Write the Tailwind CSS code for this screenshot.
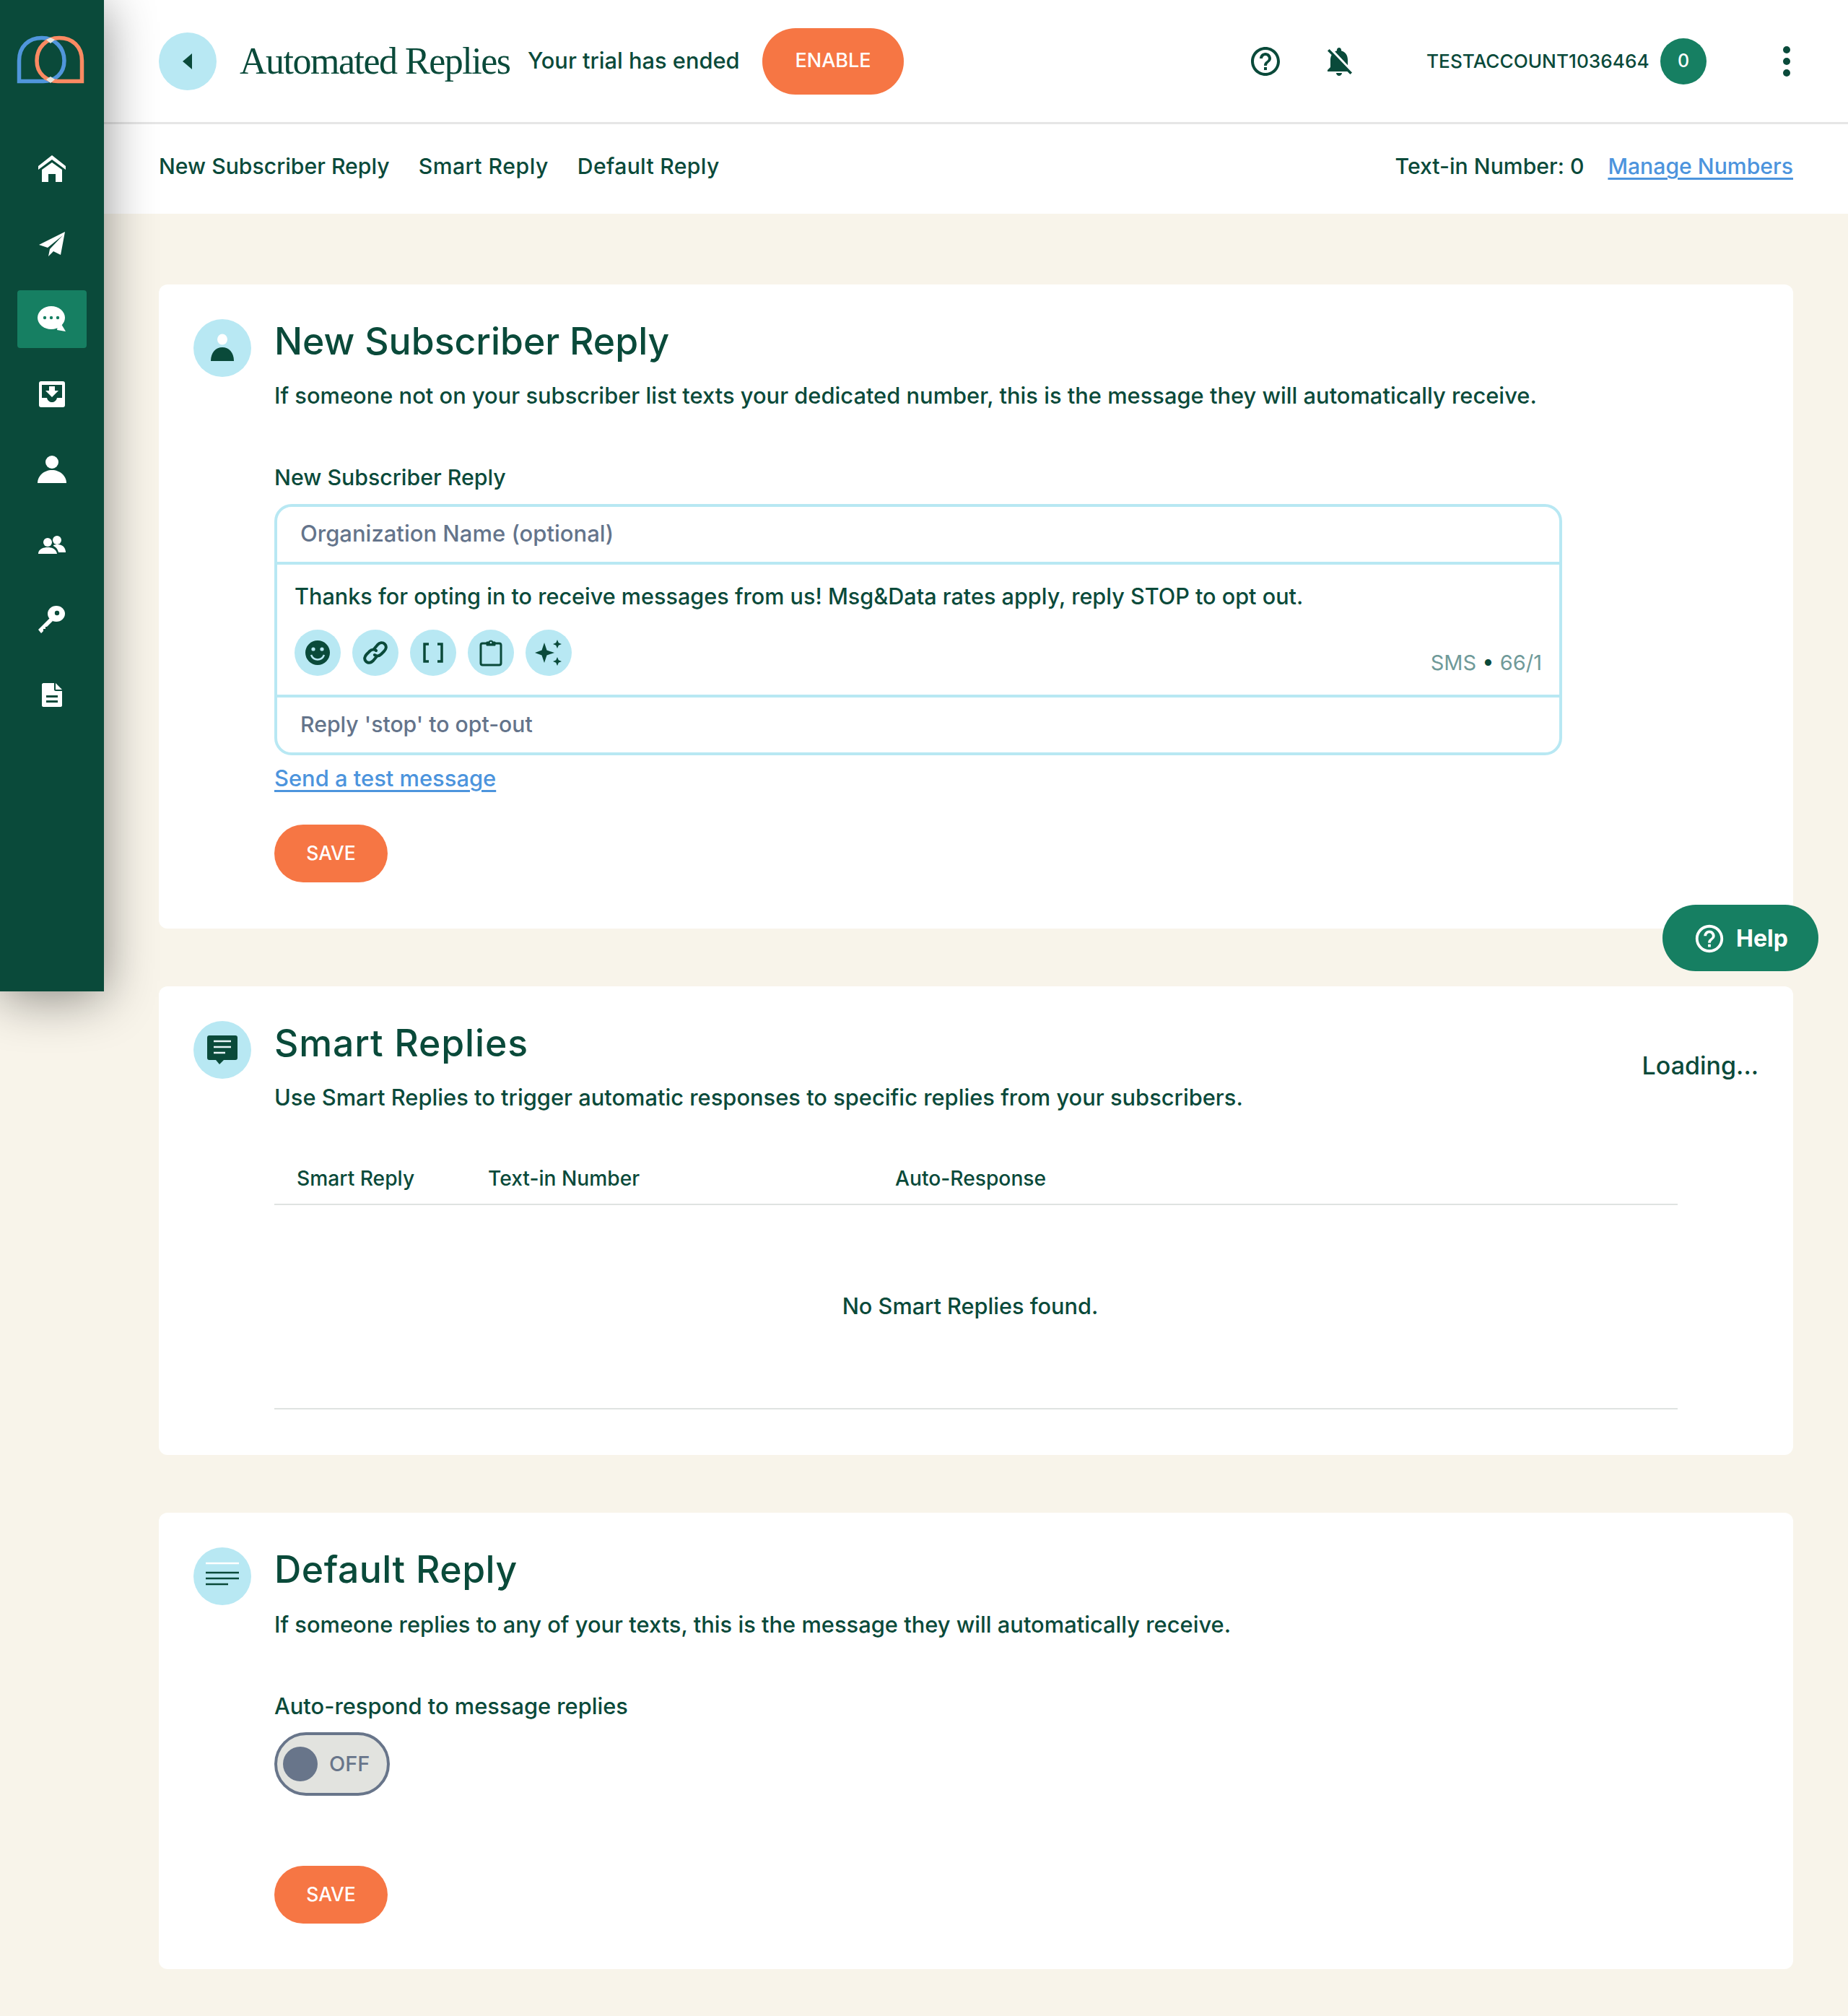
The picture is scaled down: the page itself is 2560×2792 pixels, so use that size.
<!DOCTYPE html>
<html lang="en">
<head>
    <meta charset="UTF-8">
    <title>Automated Replies</title>
    <script src="https://cdn.jsdelivr.net/npm/@tailwindcss/browser@4"></script>
</head>
<body class="bg-[#f8f4ea] font-['Inter',sans-serif] text-[#0a4a3a]">
<div class="relative flex w-[2560px] h-[2792px] overflow-hidden">

    <!-- Sidebar -->
    <aside class="relative z-10 w-[144px] h-[1373px] shrink-0 bg-[#0a4a3a] shadow-[0_8px_70px_rgba(0,0,0,0.45)] flex flex-col items-center">
        <div class="h-[194px] w-full">
            <svg class="w-[144px] h-[130px]" viewBox="0 0 144 130" fill="none" stroke-width="5.5">
                <path d="M26.5 112.5V84C26.5 64 40 52.5 58 52.5C76 52.5 89 66 89 84C89 102 76 112.5 60 112.5Z" stroke="#5096dc"/>
                <path d="M113.5 112.5V84C113.5 64 100 52.5 82 52.5C64 52.5 51 66 51 84C51 102 64 112.5 80 112.5Z" stroke="#fb8a62"/>
                <path d="M64 55L70 52L76 55L70 60Z M64 110L70 106L76 110L70 115Z" fill="#e6e4dc" stroke="none"/>
            </svg>
        </div>
        <nav class="flex flex-col gap-[24px] w-[96px]">
            <a class="h-[80px] flex items-center justify-center">
                <svg class="w-[40px] h-[40px]" viewBox="0 0 40 40" fill="#fff"><path d="M20 1L39 16V21L20 7L1 21V16Z"/><path d="M20 11L34 21V38H25V27H15V38H6V21Z"/></svg>
            </a>
            <a class="h-[80px] flex items-center justify-center">
                <svg class="w-[40px] h-[40px]" viewBox="0 0 40 40" fill="#fff"><path d="M38 3L2 21L14 25L35 8L17 27L15 37L22 30L32 35Z"/></svg>
            </a>
            <a class="h-[80px] flex items-center justify-center bg-[#167f62] rounded-[4px]">
                <svg class="w-[40px] h-[40px]" viewBox="0 0 40 40" fill="#fff"><ellipse cx="19" cy="18" rx="19" ry="16"/><path d="M28 28L32 30L33 27L39 37L27 35Z"/><g fill="#167f62"><circle cx="10" cy="18" r="2.2"/><circle cx="19" cy="18" r="2.2"/><circle cx="28" cy="18" r="2.2"/></g></svg>
            </a>
            <a class="h-[80px] flex items-center justify-center">
                <svg class="w-[40px] h-[40px]" viewBox="0 0 40 40"><rect x="2" y="2" width="36" height="36" rx="3" fill="#fff"/><path d="M6 7H34V25H27C26 29 23 31 20 31C17 31 14 29 13 25H6Z" fill="#0a4a3a"/><path d="M16 9H24V15H29L20 24L11 15H16Z" fill="#fff"/></svg>
            </a>
            <a class="h-[80px] flex items-center justify-center">
                <svg class="w-[40px] h-[40px]" viewBox="0 0 40 40" fill="#fff"><ellipse cx="20" cy="10" rx="9" ry="9"/><path d="M0 39C0 29 9 21 20 21C31 21 40 29 40 39Z"/></svg>
            </a>
            <a class="h-[80px] flex items-center justify-center">
                <svg class="w-[40px] h-[40px]" viewBox="0 0 40 40" fill="#fff"><circle cx="14" cy="17" r="6"/><path d="M1 33C1 27 7 24 14 24C21 24 26 27 27 33Z"/><circle cx="27" cy="14" r="6"/><path d="M22 21C24 20 26 20 28 20C34 20 39 24 39 31H29C28 27 26 24 22 22Z"/></svg>
            </a>
            <a class="h-[80px] flex items-center justify-center">
                <svg class="w-[40px] h-[40px]" viewBox="0 0 40 40"><ellipse cx="26" cy="12" rx="12" ry="11" fill="#fff"/><circle cx="27" cy="11" r="3.200" fill="#0a4a3a"/><path d="M17 18L21 22L13 30H11V33H8V36L5 39L1 34Z" fill="#fff"/></svg>
            </a>
            <a class="h-[80px] flex items-center justify-center">
                <svg class="w-[28px] h-[33px]" viewBox="0 0 28 33"><path d="M2 0H17V9C17 10 18 11 19 11H28V31C28 32 27 33 26 33H2C1 33 0 32 0 31V2C0 1 1 0 2 0Z" fill="#fff"/><path d="M19 0L28 9H19Z" fill="#fff"/><path d="M6 17H22V20H6ZM6 24H22V27H6Z" fill="#0a4a3a"/></svg>
            </a>
        </nav>
    </aside>

    <div class="flex-1 min-w-0">
        <!-- Header -->
        <header class="bg-white h-[172px] border-b-[3px] border-[#e6e6e6] pl-[76px] flex items-center">
            <button class="w-[80px] h-[80px] rounded-full bg-[#b8e8f3] flex items-center justify-center shrink-0">
                <svg class="w-[14px] h-[22px]" viewBox="0 0 14 22" fill="#0a4a3a"><path d="M13 0V22L0 11Z"/></svg>
            </button>
            <h1 class="ml-[32px] w-[375px] shrink-0 font-['Liberation_Serif',serif] text-[52px] leading-[60px] tracking-[-1.5px] whitespace-nowrap">Automated Replies</h1>
            <span class="ml-[24px] w-[293px] shrink-0 text-[30.800px] font-medium whitespace-nowrap">Your trial has ended</span>
            <button class="ml-[32px] w-[196px] h-[92px] shrink-0 rounded-full bg-[#f67644] text-white text-[27px] font-medium">ENABLE</button>
            <svg class="ml-[477px] w-[48px] h-[48px] shrink-0" viewBox="0 0 24 24" fill="#0a4a3a"><path d="M11 18h2v-2h-2v2zm1-16C6.48 2 2 6.48 2 12s4.48 10 10 10 10-4.48 10-10S17.52 2 12 2zm0 18c-4.41 0-8-3.59-8-8s3.59-8 8-8 8 3.59 8 8-3.59 8-8 8zm0-14c-2.21 0-4 1.79-4 4h2c0-1.1.9-2 2-2s2 .9 2 2c0 2-3 1.75-3 5h2c0-2.25 3-2.5 3-5 0-2.21-1.79-4-4-4z"/></svg>
            <svg class="ml-[54px] w-[48px] h-[48px] shrink-0" viewBox="0 0 24 24" fill="#0a4a3a"><path d="M20 18.69L7.84 6.14 5.27 3.49 4 4.76l2.8 2.8v.01c-.52.99-.8 2.16-.8 3.42v5l-2 2v1h13.73l2 2L21 19.72l-1-1.03zM12 22c1.11 0 2-.89 2-2h-4c0 1.11.89 2 2 2zm6-7.32V11c0-3.08-1.64-5.64-4.5-6.32V4c0-.83-.67-1.5-1.5-1.5s-1.5.67-1.5 1.5v.68c-.15.03-.29.08-.42.12-.1.03-.2.07-.3.11h-.01c-.2.08-.4.17-.59.27-.01 0-.01 0-.02.01L18 14.68z"/></svg>
            <span class="ml-[97px] w-[308px] shrink-0 text-[26.200px] font-medium whitespace-nowrap">TESTACCOUNT1036464</span>
            <span class="ml-[16px] w-[64px] h-[64px] rounded-full bg-[#167f62] text-white text-[25px] font-medium flex items-center justify-center shrink-0">0</span>
            <svg class="ml-[105px] w-[12px] h-[44px] shrink-0" viewBox="0 0 12 44" fill="#0a4a3a"><circle cx="6" cy="6" r="5"/><circle cx="6" cy="22" r="5"/><circle cx="6" cy="38" r="5"/></svg>
        </header>

        <!-- Sub navigation -->
        <div class="bg-white h-[124px] pl-[76px] pr-[76px] pb-[6px] flex items-center justify-between text-[30.200px] font-medium">
            <div class="flex gap-[40px]">
                <a>New Subscriber Reply</a>
                <a class="tracking-[0.5px]">Smart Reply</a>
                <a class="tracking-[0.3px]">Default Reply</a>
            </div>
            <div class="flex gap-[33px]">
                <span>Text-in Number: 0</span>
                <a class="text-[#4c94dd] underline underline-offset-[5px]">Manage Numbers</a>
            </div>
        </div>

        <main class="pl-[76px] pr-[76px] pt-[98px]">
            <!-- New Subscriber Reply -->
            <section class="bg-white rounded-[12px] h-[892px] p-[48px] flex gap-[32px]">
                <div class="w-[80px] h-[80px] rounded-full bg-[#b8e8f3] flex items-center justify-center shrink-0">
                    <svg class="w-[32px] h-[40px]" viewBox="0 0 32 40"><ellipse cx="16" cy="8" rx="7" ry="7.5" fill="#fff"/><path d="M0 38C0 26 7 19 16 19C25 19 32 26 32 38Z" fill="#0a4a3a"/></svg>
                </div>
                <div class="flex-1">
                    <h2 class="text-[51.700px] leading-[60px] font-medium">New Subscriber Reply</h2>
                    <p class="mt-[26px] text-[30.850px] leading-[40px] font-medium whitespace-nowrap">If someone not on your subscriber list texts your dedicated number, this is the message they will automatically receive.</p>
                    <label class="block mt-[75px] text-[30.300px] leading-[36px] font-medium">New Subscriber Reply</label>
                    <div class="mt-[19px] w-[1784px] border-[4px] border-[#b8e8f3] rounded-[24px]">
                        <div class="h-[76px] pl-[32px] pb-[2px] flex items-center text-[31px] text-[#64748b] font-medium">Organization Name (optional)</div>
                        <div class="h-[188px] border-y-[4px] border-[#b8e8f3] pl-[24px] pr-[24px]">
                            <p class="pt-[24px] text-[30.600px] leading-[40px] font-medium">Thanks for opting in to receive messages from us! Msg&amp;Data rates apply, reply STOP to opt out.</p>
                            <div class="mt-[26px] flex items-end justify-between">
                                <div class="flex gap-[16px]">
                                    <button class="w-[64px] h-[64px] rounded-full bg-[#b8e8f3] flex items-center justify-center">
                                        <svg class="w-[36px] h-[36px]" viewBox="0 0 36 36"><circle cx="18" cy="18" r="17" fill="#0a4a3a"/><circle cx="12" cy="13" r="2.6" fill="#b8e8f3"/><circle cx="24" cy="13" r="2.6" fill="#b8e8f3"/><path d="M9 21C11 26 14 27.500 18 27.500C22 27.500 25 26 27 21" fill="none" stroke="#b8e8f3" stroke-width="2.500"/></svg>
                                    </button>
                                    <button class="w-[64px] h-[64px] rounded-full bg-[#b8e8f3] flex items-center justify-center">
                                        <svg class="w-[34px] h-[34px]" viewBox="0 0 34 34" fill="none" stroke="#0a4a3a" stroke-width="4" stroke-linecap="round"><path d="M15 12L20 6C23 3 27 2 30 5C33 8 32 12 29 15L25 19C22 22 18 22 16 20"/><path d="M19 22L14 28C11 31 7 32 4 29C1 26 2 22 5 19L9 15C12 12 16 12 18 14"/></svg>
                                    </button>
                                    <button class="w-[64px] h-[64px] rounded-full bg-[#b8e8f3] flex items-center justify-center">
                                        <svg class="w-[28px] h-[28px]" viewBox="0 0 28 28" fill="none" stroke="#0a4a3a" stroke-width="3.500"><path d="M8 2H2V26H8"/><path d="M20 2H26V26H20"/></svg>
                                    </button>
                                    <button class="w-[64px] h-[64px] rounded-full bg-[#b8e8f3] flex items-center justify-center">
                                        <svg class="w-[32px] h-[38px]" viewBox="0 0 32 38" fill="none" stroke="#0a4a3a" stroke-width="3"><rect x="2" y="6" width="28" height="30" rx="2.500"/><path d="M10 4H13C13 1.500 19 1.500 19 4H22V9H10Z" fill="#0a4a3a" stroke-width="1"/><circle cx="16" cy="5" r="1.300" fill="#b8e8f3" stroke="none"/></svg>
                                    </button>
                                    <button class="w-[64px] h-[64px] rounded-full bg-[#b8e8f3] flex items-center justify-center">
                                        <svg class="w-[38px] h-[36px]" viewBox="0 0 38 36" fill="#0a4a3a"><path d="M13 4L16.500 14.500L27 18L16.500 21.500L13 32L9.500 21.500L0 18L9.500 14.500Z"/><path d="M31 0L32.800 4.200L37 6L32.800 7.800L31 12L29.200 7.800L25 6L29.200 4.200Z"/><path d="M31 24L32.800 28.200L37 30L32.800 31.800L31 36L29.200 31.800L25 30L29.200 28.200Z"/></svg>
                                    </button>
                                </div>
                                <span class="text-[29px] leading-[36px] text-[#6f9a99]">SMS <span class="text-[#0a4a3a]">•</span> 66/1</span>
                            </div>
                        </div>
                        <div class="h-[76px] pl-[32px] flex items-center text-[30.200px] text-[#64748b] font-medium">Reply 'stop' to opt-out</div>
                    </div>
                    <a class="block mt-[14px] text-[30.900px] leading-[36px] font-medium text-[#4c94dd] underline underline-offset-[5px]">Send a test message</a>
                    <button class="block mt-[46px] w-[157px] h-[80px] rounded-full bg-[#f67644] text-white text-[26.500px] font-medium">SAVE</button>
                </div>
            </section>

            <!-- Smart Replies -->
            <section class="mt-[80px] bg-white rounded-[12px] h-[649px] p-[48px] flex gap-[32px]">
                <div class="w-[80px] h-[80px] rounded-full bg-[#b8e8f3] flex items-center justify-center shrink-0">
                    <svg class="w-[44px] h-[42px]" viewBox="0 0 44 42"><path d="M4 1H40C42 1 43 2 43 4V32C43 34 42 35 40 35H24L18 41L13 35H4C2 35 1 34 1 32V4C1 2 2 1 4 1Z" fill="#0a4a3a"/><path d="M10 9H34M10 17H34M10 25H26" stroke="#e8f6f8" stroke-width="2.500"/></svg>
                </div>
                <div class="flex-1">
                    <div class="flex justify-between">
                        <h2 class="text-[51.700px] leading-[60px] tracking-[0.9px] font-medium">Smart Replies</h2>
                        <span class="mt-[42px] text-[34px] leading-[40px] font-medium">Loading...</span>
                    </div>
                    <p class="mt-[4px] text-[30.850px] leading-[40px] font-medium">Use Smart Replies to trigger automatic responses to specific replies from your subscribers.</p>
                    <div class="mt-[74px] w-[1944px] border-b-[2px] border-[#dfe3e1]">
                        <div class="flex h-[55px] items-start border-b-[2px] border-[#dfe3e1] text-[28.200px] font-medium leading-[36px]">
                            <span class="ml-[31px] w-[265px]">Smart Reply</span>
                            <span class="w-[564px]">Text-in Number</span>
                            <span>Auto-Response</span>
                        </div>
                        <div class="h-[281px] pr-[16px] flex items-center justify-center text-[30.700px] font-medium">No Smart Replies found.</div>
                    </div>
                </div>
            </section>

            <!-- Default Reply -->
            <section class="mt-[80px] bg-white rounded-[12px] h-[632px] p-[48px] flex gap-[32px]">
                <div class="w-[80px] h-[80px] rounded-full bg-[#b8e8f3] flex items-center justify-center shrink-0">
                    <svg class="w-[48px] h-[40px]" viewBox="0 0 48 40" fill="none" stroke-width="2.500"><path d="M1 2H47" stroke="#fff"/><path d="M1 15H47M1 23H47M1 31H32" stroke="#0a4a3a"/></svg>
                </div>
                <div class="flex-1">
                    <h2 class="text-[51.700px] leading-[60px] tracking-[0.5px] font-medium">Default Reply</h2>
                    <p class="mt-[27px] text-[30.850px] leading-[40px] font-medium">If someone replies to any of your texts, this is the message they will automatically receive.</p>
                    <label class="block mt-[75px] text-[30.800px] leading-[36px] font-medium">Auto-respond to message replies</label>
                    <div class="mt-[18px] w-[160px] h-[88px] rounded-full border-[4px] border-[#68758a] bg-[#e2e3df] flex items-center pl-[8px]">
                        <span class="w-[48px] h-[48px] rounded-full bg-[#68758a]"></span>
                        <span class="ml-[16px] text-[29px] font-medium text-[#68758a]">OFF</span>
                    </div>
                    <button class="block mt-[97px] w-[157px] h-[80px] rounded-full bg-[#f67644] text-white text-[26.500px] font-medium">SAVE</button>
                </div>
            </section>
        </main>
    </div>

    <!-- Floating help button -->
    <button class="absolute left-[2303px] top-[1253px] z-20 w-[216px] h-[92px] pt-[1px] rounded-full bg-[#167f62] text-white text-[32px] font-bold flex items-center justify-center gap-[14px]">
        <svg class="w-[46px] h-[46px]" viewBox="0 0 24 24" fill="#fff"><path d="M11 18h2v-2h-2v2zm1-16C6.48 2 2 6.48 2 12s4.48 10 10 10 10-4.48 10-10S17.52 2 12 2zm0 18c-4.41 0-8-3.59-8-8s3.59-8 8-8 8 3.59 8 8-3.59 8-8 8zm0-14c-2.21 0-4 1.79-4 4h2c0-1.1.9-2 2-2s2 .9 2 2c0 2-3 1.75-3 5h2c0-2.25 3-2.5 3-5 0-2.21-1.79-4-4-4z"/></svg>
        Help
    </button>
</div>
</body>
</html>
